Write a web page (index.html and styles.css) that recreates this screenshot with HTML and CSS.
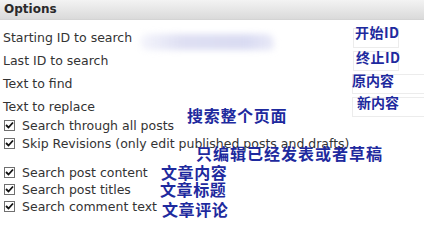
FILE: index.html
```html
<!DOCTYPE html>
<html>
<head>
<meta charset="utf-8">
<link rel="stylesheet" href="styles.css">
</head>
<body>
<div class="panel">
  <div class="header">Options</div>
  <div class="fields">
    <div class="row"><span class="label">Starting ID to search</span><span class="box small"></span></div>
    <div class="row"><span class="label">Last ID to search</span><span class="box small"></span></div>
    <div class="row"><span class="label">Text to find</span><span class="box wide"></span></div>
    <div class="row"><span class="label">Text to replace</span><span class="box wide"></span></div>
  </div>
  <div class="checks">
    <div class="check"><span class="cb"><svg width="9" height="9" viewBox="0 0 9 9"><path d="M1 4 L3.5 6.5 L8 1.5" fill="none" stroke="#111" stroke-width="1.8"/></svg></span>Search through all posts</div>
    <div class="check"><span class="cb"><svg width="9" height="9" viewBox="0 0 9 9"><path d="M1 4 L3.5 6.5 L8 1.5" fill="none" stroke="#111" stroke-width="1.8"/></svg></span>Skip Revisions (only edit published posts and drafts)</div>
  </div>
  <div class="checks second">
    <div class="check"><span class="cb"><svg width="9" height="9" viewBox="0 0 9 9"><path d="M1 4 L3.5 6.5 L8 1.5" fill="none" stroke="#111" stroke-width="1.8"/></svg></span>Search post content</div>
    <div class="check"><span class="cb"><svg width="9" height="9" viewBox="0 0 9 9"><path d="M1 4 L3.5 6.5 L8 1.5" fill="none" stroke="#111" stroke-width="1.8"/></svg></span>Search post titles</div>
    <div class="check"><span class="cb"><svg width="9" height="9" viewBox="0 0 9 9"><path d="M1 4 L3.5 6.5 L8 1.5" fill="none" stroke="#111" stroke-width="1.8"/></svg></span>Search comment text</div>
  </div>

  <div class="blur"></div>

  <span class="note n1">开始ID</span>
  <span class="note n2">终止ID</span>
  <span class="note n3">原内容</span>
  <span class="note n4">新内容</span>
  <span class="note n5">搜索整个页面</span>
  <span class="note n6">只编辑已经发表或者草稿</span>
  <span class="note n7">文章内容</span>
  <span class="note n8">文章标题</span>
  <span class="note n9">文章评论</span>
</div>
</body>
</html>
```
FILE: styles.css
```css
html, body {
  margin: 0;
  padding: 0;
  background: #ffffff;
}
.panel {
  position: relative;
  width: 424px;
  height: 223px;
  overflow: hidden;
  font-family: "DejaVu Sans", Verdana, sans-serif;
  font-size: 12.5px;
  color: #333333;
}
.header {
  height: 19px;
  line-height: 19px;
  padding-left: 4px;
  font-weight: bold;
  font-size: 12px;
  color: #2a2a2a;
  background: linear-gradient(#f3f3f3, #dadada);
  border-bottom: 1px solid #d4d4d4;
}
.fields {
  padding-top: 6px;
}
.row {
  display: grid;
  grid-template-columns: 352px 1fr;
  height: 23px;
  align-items: center;
}
.label {
  padding-left: 3px;
}
.box {
  height: 20px;
  border: 1px solid #ececec;
  box-sizing: border-box;
}
.box.small {
  width: 46px;
  margin-left: 1px;
}
.box.wide {
  margin-right: -10px;
}
.checks {
  margin-top: -2px;
}
.checks.second {
  margin-top: 12px;
}
.check {
  display: flex;
  align-items: center;
  height: 18px;
  padding-left: 4px;
  white-space: nowrap;
}
.checks.second .check {
  height: 17px;
}
.cb {
  display: inline-flex;
  align-items: center;
  justify-content: center;
  width: 11px;
  height: 11px;
  box-sizing: border-box;
  border: 1px solid #6f6f6f;
  background: #ffffff;
  margin-right: 7px;
  flex: none;
}
.blur {
  position: absolute;
  left: 140px;
  top: 34px;
  width: 134px;
  height: 16px;
  border-radius: 8px 8px 4px 8px;
  background: linear-gradient(90deg, rgba(222,224,245,0.3), #dfe0f3 30%, #d9dbf2 80%, rgba(225,226,245,0.7));
  filter: blur(3px);
}
.note {
  position: absolute;
  font-family: "Noto Sans CJK SC", sans-serif;
  font-weight: 700;
  font-size: 14px;
  line-height: 14px;
  color: #1e2a9e;
  white-space: nowrap;
}
.n1 { left: 355px; top: 25px; letter-spacing: 0.5px; }
.n2 { left: 356px; top: 50px; letter-spacing: 0.5px; }
.n3 { left: 352px; top: 73px; }
.n4 { left: 357px; top: 95px; }
.n5 { left: 187px; top: 107px; font-size: 16px; line-height: 16px; letter-spacing: 0.7px; }
.n6 { left: 196px; top: 145px; font-size: 16px; line-height: 16px; letter-spacing: 1px; }
.n7 { left: 161px; top: 164px; font-size: 16px; line-height: 16px; letter-spacing: 0.6px; }
.n8 { left: 160px; top: 181px; font-size: 16px; line-height: 16px; letter-spacing: 0.6px; }
.n9 { left: 162px; top: 201px; font-size: 16px; line-height: 16px; letter-spacing: 0.6px; }
```
